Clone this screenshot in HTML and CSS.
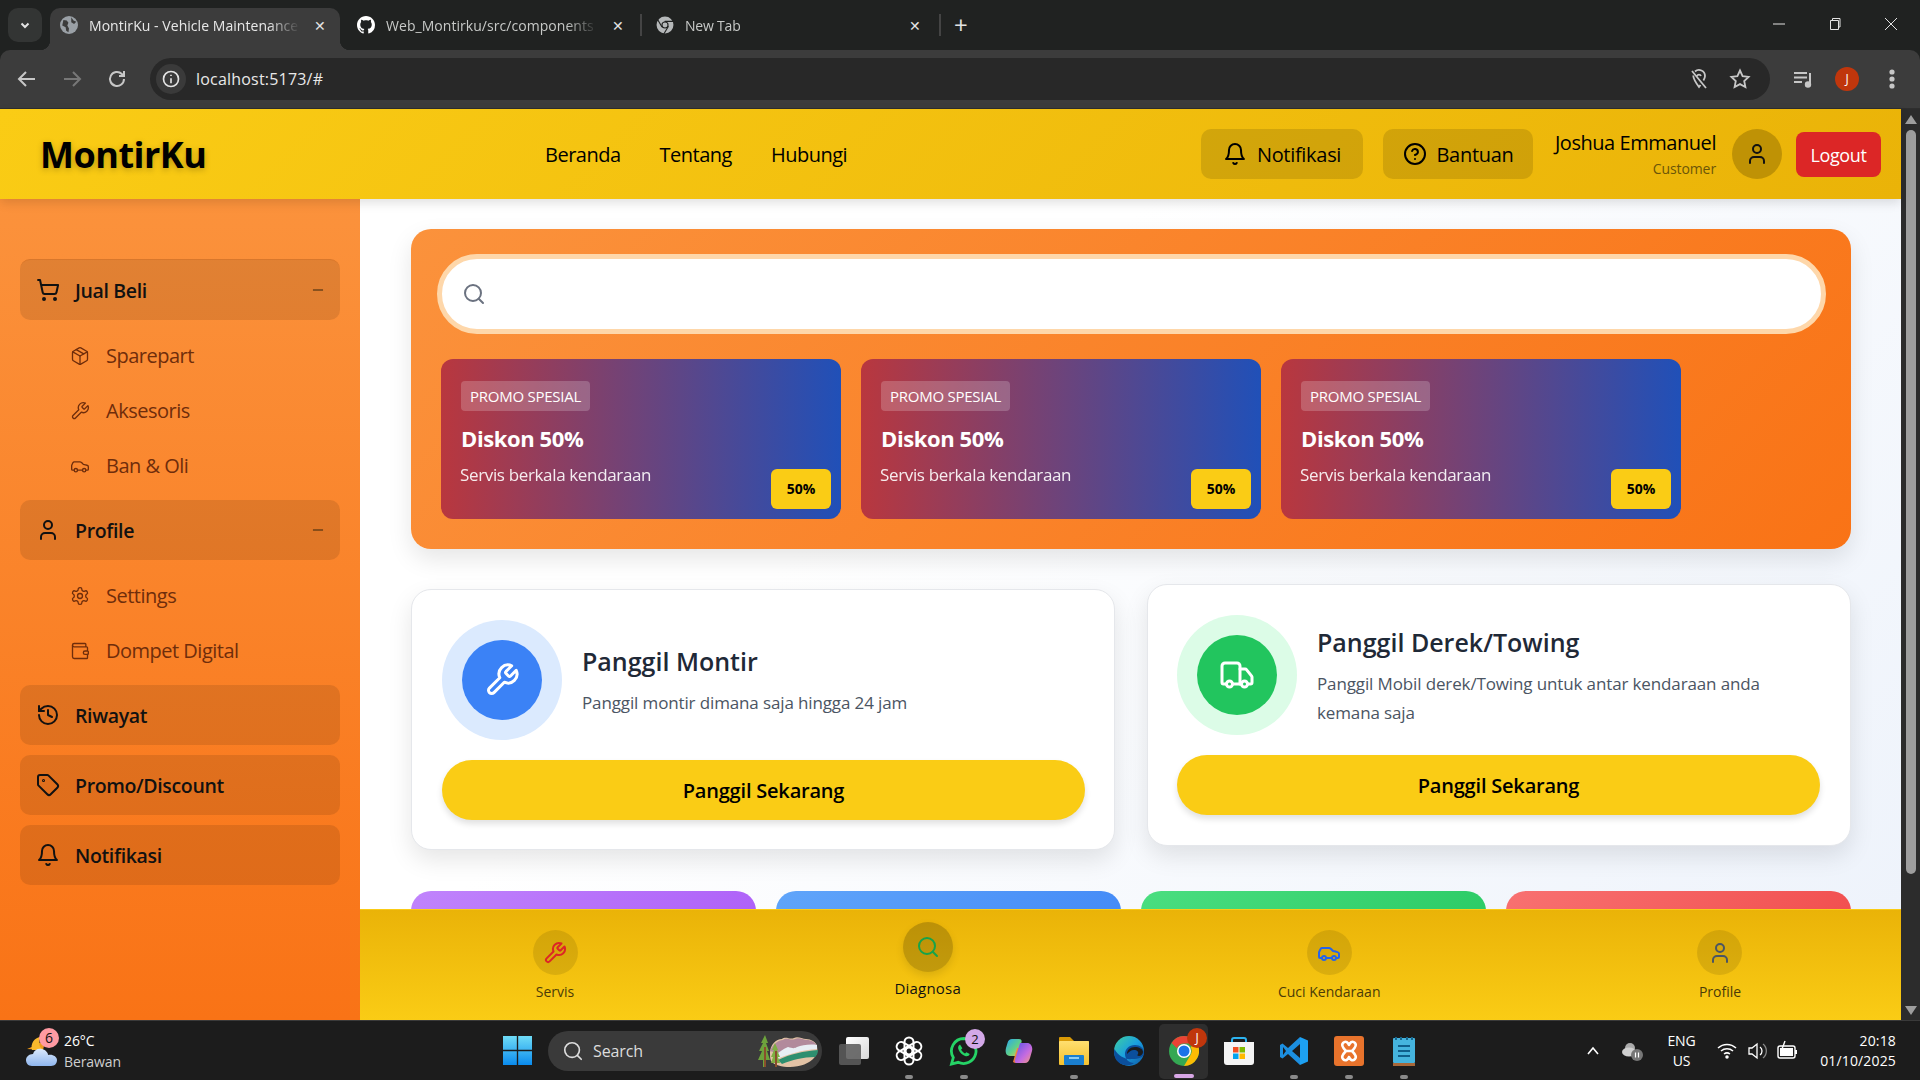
FILE: index.html
```html
<!DOCTYPE html>
<html>
<head>
  <meta charset="UTF-8">
  <link rel="stylesheet" href="styles.css">
  <title>MontirKu - Vehicle Maintenance</title>
</head>
<body>
  <svg class="sprite" xmlns="http://www.w3.org/2000/svg">
    <symbol id="i-cart" viewBox="0 0 24 24"><circle cx="8" cy="21" r="1"/><circle cx="19" cy="21" r="1"/><path d="M2.05 2.05h2l2.66 12.42a2 2 0 0 0 2 1.58h9.78a2 2 0 0 0 1.95-1.57l1.65-7.43H5.12"/></symbol>
    <symbol id="i-package" viewBox="0 0 24 24"><path d="M7.5 4.27l9 5.15"/><path d="M21 8a2 2 0 0 0-1-1.73l-7-4a2 2 0 0 0-2 0l-7 4A2 2 0 0 0 3 8v8a2 2 0 0 0 1 1.73l7 4a2 2 0 0 0 2 0l7-4A2 2 0 0 0 21 16Z"/><path d="m3.3 7 8.7 5 8.7-5"/><path d="M12 22V12"/></symbol>
    <symbol id="i-wrench" viewBox="0 0 24 24"><path d="M14.7 6.3a1 1 0 0 0 0 1.4l1.6 1.6a1 1 0 0 0 1.4 0l3.77-3.77a6 6 0 0 1-7.94 7.94l-6.91 6.91a2.12 2.12 0 0 1-3-3l6.91-6.91a6 6 0 0 1 7.94-7.94l-3.76 3.76z"/></symbol>
    <symbol id="i-car" viewBox="0 0 24 24"><path d="M19 17h2c.6 0 1-.4 1-1v-3c0-.9-.7-1.7-1.5-1.9C18.7 10.6 16 10 16 10s-1.3-1.4-2.2-2.3c-.5-.4-1.1-.7-1.8-.7H5c-.6 0-1.1.4-1.4.9l-1.4 2.9A3.7 3.7 0 0 0 2 12v4c0 .6.4 1 1 1h2"/><circle cx="7" cy="17" r="2"/><path d="M9 17h6"/><circle cx="17" cy="17" r="2"/></symbol>
    <symbol id="i-user" viewBox="0 0 24 24"><path d="M19 21v-2a4 4 0 0 0-4-4H9a4 4 0 0 0-4 4v2"/><circle cx="12" cy="7" r="4"/></symbol>
    <symbol id="i-settings" viewBox="0 0 24 24"><path d="M12.22 2h-.44a2 2 0 0 0-2 2v.18a2 2 0 0 1-1 1.73l-.43.25a2 2 0 0 1-2 0l-.15-.08a2 2 0 0 0-2.73.73l-.22.38a2 2 0 0 0 .73 2.73l.15.1a2 2 0 0 1 1 1.72v.51a2 2 0 0 1-1 1.74l-.15.09a2 2 0 0 0-.73 2.73l.22.38a2 2 0 0 0 2.73.73l.15-.08a2 2 0 0 1 2 0l.43.25a2 2 0 0 1 1 1.73V20a2 2 0 0 0 2 2h.44a2 2 0 0 0 2-2v-.18a2 2 0 0 1 1-1.73l.43-.25a2 2 0 0 1 2 0l.15.08a2 2 0 0 0 2.73-.73l.22-.39a2 2 0 0 0-.73-2.73l-.15-.08a2 2 0 0 1-1-1.74v-.5a2 2 0 0 1 1-1.74l.15-.09a2 2 0 0 0 .73-2.73l-.22-.38a2 2 0 0 0-2.73-.73l-.15.08a2 2 0 0 1-2 0l-.43-.25a2 2 0 0 1-1-1.73V4a2 2 0 0 0-2-2z"/><circle cx="12" cy="12" r="3"/></symbol>
    <symbol id="i-wallet" viewBox="0 0 24 24"><path d="M19 7V4a1 1 0 0 0-1-1H5a2 2 0 0 0 0 4h15a1 1 0 0 1 1 1v4h-3a2 2 0 0 0 0 4h3a1 1 0 0 0 1-1v-2a1 1 0 0 0-1-1"/><path d="M3 5v14a2 2 0 0 0 2 2h15a1 1 0 0 0 1-1v-4"/></symbol>
    <symbol id="i-history" viewBox="0 0 24 24"><path d="M3 12a9 9 0 1 0 9-9 9.75 9.75 0 0 0-6.74 2.74L3 8"/><path d="M3 3v5h5"/><path d="M12 7v5l4 2"/></symbol>
    <symbol id="i-tag" viewBox="0 0 24 24"><path d="M12.586 2.586A2 2 0 0 0 11.172 2H4a2 2 0 0 0-2 2v7.172a2 2 0 0 0 .586 1.414l8.704 8.704a2.426 2.426 0 0 0 3.42 0l6.58-6.58a2.426 2.426 0 0 0 0-3.42z"/><circle cx="7.5" cy="7.5" r=".5"/></symbol>
    <symbol id="i-bell" viewBox="0 0 24 24"><path d="M6 8a6 6 0 0 1 12 0c0 7 3 9 3 9H3s3-2 3-9"/><path d="M10.3 21a1.94 1.94 0 0 0 3.4 0"/></symbol>
    <symbol id="i-help" viewBox="0 0 24 24"><circle cx="12" cy="12" r="10"/><path d="M9.09 9a3 3 0 0 1 5.83 1c0 2-3 3-3 3"/><path d="M12 17h.01"/></symbol>
    <symbol id="i-search" viewBox="0 0 24 24"><circle cx="11" cy="11" r="8"/><path d="m21 21-4.3-4.3"/></symbol>
    <symbol id="i-truck" viewBox="0 0 24 24"><path d="M14 18V6a2 2 0 0 0-2-2H4a2 2 0 0 0-2 2v11a1 1 0 0 0 1 1h2"/><path d="M15 18H9"/><path d="M19 18h2a1 1 0 0 0 1-1v-3.65a1 1 0 0 0-.22-.624l-3.48-4.35A1 1 0 0 0 17.52 8H14"/><circle cx="17" cy="18" r="2"/><circle cx="7" cy="18" r="2"/></symbol>
    <symbol id="i-minus" viewBox="0 0 24 24"><path d="M5 12h14"/></symbol>
    <symbol id="i-globe" viewBox="0 0 16 16"><circle cx="8" cy="8" r="8" fill="#9aa0a6" stroke="none"/><path d="M3 3.5l3 .5 1.5 2-1 2.500 1.500 2.500-.5 3.500-2-1.500-.5-3-3-1.500z M10 1l2 3 2.500 1-2 2-2.500-1.500z" fill="#3c3c3c" stroke="none"/></symbol>
    <symbol id="i-chromelogo" viewBox="0 0 16 16"><circle cx="8" cy="8" r="7.500" fill="#b5b8b9" stroke="none"/><circle cx="8" cy="8" r="3.200" fill="#202221" stroke="none"/><circle cx="8" cy="8" r="2.200" fill="#b5b8b9" stroke="none"/><path d="M8 4.800h7M5.200 9.500L1.800 3.800M10.800 9.500L7.200 15.500" stroke="#202221" stroke-width="1"/></symbol>
  </svg>

  <div class="window">

    <!-- browser tabs -->
    <div class="tabstrip">
      <div class="tab-search"><svg width="12" height="12" viewBox="0 0 12 12"><path d="M2.500 4.500L6 8l3.500-3.500" fill="none" stroke="#e3e3e3" stroke-width="2"/></svg></div>
      <div class="tab active">
        <svg class="ico tab-ico"><use href="#i-globe"/></svg>
        <span class="tab-title">MontirKu - Vehicle Maintenance</span>
        <span class="tab-x">&#10005;</span>
      </div>
      <div class="tab tab-git">
        <svg class="tab-ico" viewBox="0 0 16 16"><path fill="#fff" d="M8 0C3.580 0 0 3.580 0 8c0 3.540 2.290 6.530 5.470 7.590.4.070.55-.17.55-.38 0-.19-.01-.82-.01-1.490-2.010.37-2.530-.49-2.690-.94-.09-.23-.48-.94-.82-1.130-.28-.15-.68-.52-.01-.53.630-.01 1.080.58 1.230.82.720 1.210 1.870.87 2.330.66.070-.52.280-.87.510-1.070-1.780-.2-3.640-.89-3.640-3.950 0-.87.310-1.590.82-2.150-.08-.2-.36-1.020.08-2.120 0 0 .67-.21 2.200.82.64-.18 1.320-.27 2-.27s1.360.09 2 .27c1.530-1.040 2.200-.82 2.200-.82.44 1.100.16 1.920.08 2.120.51.560.82 1.270.82 2.150 0 3.070-1.870 3.750-3.650 3.950.29.250.54.730.54 1.480 0 1.070-.01 1.930-.01 2.200 0 .21.150.46.550.38A8.010 8.010 0 0 0 16 8c0-4.420-3.580-8-8-8z"/></svg>
        <span class="tab-title">Web_Montirku/src/components</span>
        <span class="tab-x">&#10005;</span>
      </div>
      <div class="tab tab-sep">
        <svg class="ico tab-ico"><use href="#i-chromelogo"/></svg>
        <span class="tab-title">New Tab</span>
        <span class="tab-x">&#10005;</span>
      </div>
      <div class="tab-add">+</div>
      <div class="win-controls">
        <svg width="14" height="14" viewBox="0 0 14 14"><path d="M1 7h12" stroke="#e3e3e3" fill="none"/></svg>
        <svg width="14" height="14" viewBox="0 0 14 14"><path d="M2.500 3.500h8v9h-8z M4.500 3.500v-2h7.500v8.500h-1.500" stroke="#e3e3e3" fill="none"/></svg>
        <svg width="14" height="14" viewBox="0 0 14 14"><path d="M1 1l12 12M13 1L1 13" stroke="#e3e3e3" fill="none"/></svg>
      </div>
    </div>

    <!-- browser toolbar -->
    <div class="toolbar">
      <svg class="tool-ico" viewBox="0 0 24 24"><path d="M20 12H5M11 5l-7 7 7 7"/></svg>
      <svg class="tool-ico dim" viewBox="0 0 24 24"><path d="M4 12h15M13 5l7 7-7 7"/></svg>
      <svg class="tool-ico" viewBox="0 0 24 24"><path d="M19 12a7 7 0 1 1-2.200-5.100L19 9M19 4v5h-5"/></svg>
      <div class="omnibox">
        <span class="site-info"><svg viewBox="0 0 24 24"><circle cx="12" cy="12" r="9"/><path d="M12 11v6M12 7v1.500"/></svg></span>
        <span class="url">localhost:5173/#</span>
        <svg class="tool-ico omni-right" viewBox="0 0 24 24"><path d="M5 4l14 17M8 4.500A6 6 0 0 1 18 9c0 1.800-.8 3.200-1.600 4.500M6.200 8.500C6.500 12 9 16 12 20l1.500-2M10 9a2.200 2.200 0 0 1 4 0"/></svg>
        <svg class="tool-ico omni-right" viewBox="0 0 24 24"><path d="M12 3.500l2.600 5.600 6 .7-4.400 4.200 1.200 6.100L12 17.100l-5.400 3 1.200-6.100-4.400-4.200 6-.7z"/></svg>
      </div>
      <svg class="tool-ico media" viewBox="0 0 24 24"><path d="M3 6h13M3 10.500h13M3 15h8M19 6v11" /><circle cx="17" cy="17.500" r="2.200" fill="#c7c7c7"/></svg>
      <span class="chrome-avatar">J</span>
      <svg class="tool-ico dots" viewBox="0 0 24 24"><circle cx="12" cy="5" r="1.600" fill="#c7c7c7"/><circle cx="12" cy="12" r="1.600" fill="#c7c7c7"/><circle cx="12" cy="19" r="1.600" fill="#c7c7c7"/></svg>
    </div>

    <div class="viewport">
      <div class="page">

        <header class="header">
          <div class="logo">MontirKu</div>
          <nav class="topnav">
            <a>Beranda</a>
            <a>Tentang</a>
            <a>Hubungi</a>
          </nav>
          <div class="header-right">
            <button class="head-btn btn-notif"><svg class="ico"><use href="#i-bell"/></svg>Notifikasi</button>
            <button class="head-btn btn-help"><svg class="ico"><use href="#i-help"/></svg>Bantuan</button>
            <div class="user-info">
              <div class="user-name">Joshua Emmanuel</div>
              <div class="user-role">Customer</div>
            </div>
            <div class="user-avatar"><svg class="ico"><use href="#i-user"/></svg></div>
            <button class="logout">Logout</button>
          </div>
        </header>

        <div class="body-row">
          <aside class="sidebar">
            <div class="side-item first"><svg class="ico"><use href="#i-cart"/></svg><span>Jual Beli</span><svg class="ico side-minus"><use href="#i-minus"/></svg></div>
            <div class="side-sub"><svg class="ico"><use href="#i-package"/></svg>Sparepart</div>
            <div class="side-sub"><svg class="ico"><use href="#i-wrench"/></svg>Aksesoris</div>
            <div class="side-sub"><svg class="ico"><use href="#i-car"/></svg>Ban &amp; Oli</div>
            <div class="side-item"><svg class="ico"><use href="#i-user"/></svg><span>Profile</span><svg class="ico side-minus"><use href="#i-minus"/></svg></div>
            <div class="side-sub"><svg class="ico"><use href="#i-settings"/></svg>Settings</div>
            <div class="side-sub"><svg class="ico"><use href="#i-wallet"/></svg>Dompet Digital</div>
            <div class="side-item"><svg class="ico"><use href="#i-history"/></svg><span>Riwayat</span></div>
            <div class="side-item"><svg class="ico"><use href="#i-tag"/></svg><span>Promo/Discount</span></div>
            <div class="side-item"><svg class="ico"><use href="#i-bell"/></svg><span>Notifikasi</span></div>
          </aside>

          <main class="main">
            <div class="content">
              <section class="panel">
                <div class="search-box"><svg class="ico"><use href="#i-search"/></svg></div>
                <div class="promo-row">
                  <div class="promo">
                    <span class="promo-tag">PROMO SPESIAL</span>
                    <h3>Diskon 50%</h3>
                    <p>Servis berkala kendaraan</p>
                    <span class="promo-off">50%</span>
                  </div>
                  <div class="promo">
                    <span class="promo-tag">PROMO SPESIAL</span>
                    <h3>Diskon 50%</h3>
                    <p>Servis berkala kendaraan</p>
                    <span class="promo-off">50%</span>
                  </div>
                  <div class="promo">
                    <span class="promo-tag">PROMO SPESIAL</span>
                    <h3>Diskon 50%</h3>
                    <p>Servis berkala kendaraan</p>
                    <span class="promo-off">50%</span>
                  </div>
                </div>
              </section>

              <section class="call-row">
                <div class="call-card low">
                  <div class="call-top">
                    <div class="ring ring-blue"><div class="disc disc-blue"><svg class="ico"><use href="#i-wrench"/></svg></div></div>
                    <div class="call-text">
                      <h2>Panggil Montir</h2>
                      <p>Panggil montir dimana saja hingga 24 jam</p>
                    </div>
                  </div>
                  <button class="call-btn">Panggil Sekarang</button>
                </div>
                <div class="call-card high">
                  <div class="call-top">
                    <div class="ring ring-green"><div class="disc disc-green"><svg class="ico"><use href="#i-truck"/></svg></div></div>
                    <div class="call-text">
                      <h2>Panggil Derek/Towing</h2>
                      <p>Panggil Mobil derek/Towing untuk antar kendaraan anda kemana saja</p>
                    </div>
                  </div>
                  <button class="call-btn">Panggil Sekarang</button>
                </div>
              </section>

              <section class="tile-row">
                <div class="tile tile-purple"></div>
                <div class="tile tile-blue"></div>
                <div class="tile tile-green"></div>
                <div class="tile tile-red"></div>
              </section>
            </div>

            <nav class="bottomnav">
              <div class="bn-item"><span class="bn-icon red"><svg class="ico"><use href="#i-wrench"/></svg></span>Servis</div>
              <div class="bn-item active"><span class="bn-icon green"><svg class="ico"><use href="#i-search"/></svg></span>Diagnosa</div>
              <div class="bn-item"><span class="bn-icon blue"><svg class="ico"><use href="#i-car"/></svg></span>Cuci Kendaraan</div>
              <div class="bn-item"><span class="bn-icon gray"><svg class="ico"><use href="#i-user"/></svg></span>Profile</div>
            </nav>
          </main>
        </div>
      </div>

      <div class="scrollbar">
        <span class="arrow-up"></span>
        <span class="thumb"></span>
        <span class="arrow-down"></span>
      </div>
    </div>

    <!-- windows taskbar -->
    <footer class="taskbar">
      <div class="weather">
        <svg class="weather-ico" viewBox="0 0 34 34">
          <defs><linearGradient id="cloud" x1="0" y1="0" x2="0" y2="1"><stop offset="0" stop-color="#dbe9fb"/><stop offset="1" stop-color="#8fb6ee"/></linearGradient></defs>
          <path d="M3 15l7-3 1-6 5 3 5-1-2 8z" fill="#ee9a1c"/>
          <path d="M17 3a9 9 0 0 0 2 13H8a10 10 0 0 1 9-13z" fill="#f9b92c"/>
          <path d="M8 32c-4 0-6-3-6-6s3-6 7-6c1-4 5-6 9-5s6 4 6 6c5-1 9 2 9 5s-2 6-6 6z" fill="url(#cloud)"/>
        </svg>
        <span class="weather-badge">6</span>
        <div class="weather-text"><div>26°C</div><div class="weather-sub">Berawan</div></div>
      </div>

      <div class="tb-center">
        <svg class="start" viewBox="0 0 30 30"><defs><linearGradient id="win" x1="0" y1="0" x2="0" y2="1"><stop offset="0" stop-color="#6fdcf6"/><stop offset="1" stop-color="#0a8bee"/></linearGradient></defs><path fill="url(#win)" d="M0 0h14.300v14.300H0zM15.700 0H30v14.300H15.700zM0 15.700h14.300V30H0zM15.700 15.700H30V30H15.700z"/></svg>
        <div class="tb-search">
          <svg class="ico"><use href="#i-search"/></svg>
          <span>Search</span>
          <svg class="tb-search-art" viewBox="0 0 64 36">
            <path d="M14 20c0-8 6-14 12-14 4-3 8 1 12-1 4-2 8 1 12 1 5 0 10 3 11 7 1 5 0 9-3 12-4 5-14 9-24 9-8 0-16-2-19-6-1-2-1-5-1-8z" fill="#e3c3a6"/>
            <path d="M14 18c3-7 8-11 13-11 4-3 8 1 12-1 4-2 8 1 12 1 4 0 8 2 10 6l-20 3-14 6z" fill="#b28a9c"/>
            <path d="M17 24c5-4 10-8 15-10 4 1 6 2 9 0 5-2 13-3 20-2v4c-14 1-30 5-42 11z" fill="#e8eef4"/>
            <path d="M22 27c12-6 26-9 40-10 0 3-1 5-3 7-12 0-23 3-33 7z" fill="#2e8f6f"/>
            <path d="M9 2L5 10h2L3 18h3L2 27h5v7h3v-7h4l-3-9h2l-3-8h2z" fill="#6da33c"/>
            <path d="M8 14h2v20H8z" fill="#8a4f2c"/>
            <path d="M19 10l-3 7h2l-3 7h2l-2 6h4v4h2v-4h3l-2-6h2l-3-7h1z" fill="#7fae42"/>
            <path d="M19 18h2v16h-2z" fill="#8a4f2c"/>
          </svg>
        </div>
        <div class="tb-app">
          <svg viewBox="0 0 30 30"><defs><linearGradient id="tv" x1="0" y1="0" x2="1" y2="1"><stop offset="0" stop-color="#fff"/><stop offset="1" stop-color="#d8d8d8"/></linearGradient></defs><rect x="7" y="1" width="23" height="22" rx="2" fill="url(#tv)"/><rect x="0" y="8" width="22" height="21" rx="2" fill="#5c5c5c" opacity=".88"/></svg>
        </div>
        <div class="tb-app running">
          <svg viewBox="0 0 30 30" fill="none" stroke="#fff" stroke-width="2">
            <rect x="10.500" y="1.500" width="9" height="17" rx="4.500" transform="rotate(0 15 15)"/>
            <rect x="10.500" y="1.500" width="9" height="17" rx="4.500" transform="rotate(60 15 15)"/>
            <rect x="10.500" y="1.500" width="9" height="17" rx="4.500" transform="rotate(120 15 15)"/>
            <rect x="10.500" y="1.500" width="9" height="17" rx="4.500" transform="rotate(180 15 15)"/>
            <rect x="10.500" y="1.500" width="9" height="17" rx="4.500" transform="rotate(240 15 15)"/>
            <rect x="10.500" y="1.500" width="9" height="17" rx="4.500" transform="rotate(300 15 15)"/>
          </svg>
        </div>
        <div class="tb-app running">
          <svg viewBox="0 0 30 30" fill="none"><path d="M15 2.500a12.500 12.500 0 0 0-10.700 19L2.500 28l6.700-1.700A12.500 12.500 0 1 0 15 2.500z" stroke="#25d366" stroke-width="2.800"/><path d="M11 8.500c-1.800 1-2.500 3-1.300 5.600 1.300 3 3.700 5 6.400 6 2.300.7 4-.2 4.600-2l-3.300-1.900-1.400 1.300c-1.600-.7-3.200-2.200-3.900-3.900l1.300-1.400z" fill="#25d366"/></svg>
          <span class="count">2</span>
        </div>
        <div class="tb-app">
          <svg viewBox="0 0 30 30">
            <defs>
              <linearGradient id="cop1" x1="0" y1="0" x2="1" y2="1"><stop offset="0" stop-color="#2aa7ee"/><stop offset=".55" stop-color="#5fd08a"/><stop offset="1" stop-color="#f6c945"/></linearGradient>
              <linearGradient id="cop2" x1="0" y1="0" x2="1" y2="1"><stop offset="0" stop-color="#5b54e8"/><stop offset=".6" stop-color="#c56be0"/><stop offset="1" stop-color="#f39a7c"/></linearGradient>
              <linearGradient id="cop3" x1="0" y1="0" x2="1" y2="1"><stop offset="0" stop-color="#f2b13a"/><stop offset="1" stop-color="#e8443f"/></linearGradient>
            </defs>
            <path d="M8 3h7c2 0 3 1 2.500 3L14 20H6c-4 0-5-4-4-8l1.500-5C4 4.500 6 3 8 3z" fill="url(#cop1)"/>
            <path d="M9 26l4-14h3l-2 12c-.3 2-1 3-3 3z" fill="url(#cop3)"/>
            <path d="M16 7h7c4 0 6 4 5 8l-2 7c-.8 3-2.500 5-5 5h-8c-2 0-2.500-1-2-3z" fill="url(#cop2)"/>
          </svg>
        </div>
        <div class="tb-app running">
          <svg viewBox="0 0 30 30"><defs><linearGradient id="fold" x1="0" y1="0" x2="0" y2="1"><stop offset="0" stop-color="#ffdf70"/><stop offset="1" stop-color="#f5c12e"/></linearGradient></defs><path d="M0 2a1 1 0 0 1 1-1h10l4 4h14a1 1 0 0 1 1 1v4H0z" fill="#d99a06"/><rect x="0" y="5" width="30" height="24" rx="1" fill="url(#fold)"/><rect x="5" y="19" width="20" height="10" rx="1" fill="#1a7fd0"/><rect x="10" y="21" width="10" height="2" fill="#8ccdf5"/></svg>
        </div>
        <div class="tb-app">
          <svg viewBox="0 0 30 30"><defs><linearGradient id="edge" x1="0" y1="0" x2="1" y2="1"><stop offset="0" stop-color="#3fd0a0"/><stop offset=".5" stop-color="#1a9fe0"/><stop offset="1" stop-color="#0c59a4"/></linearGradient></defs><circle cx="15" cy="15" r="15" fill="url(#edge)"/><path d="M30 17c0-5-4-8-9-8-6 0-10 4-10 9 0 5 4 9 9 9-6 5-20 2-20-11 0-1 0-2 .5-3C4 20 12 24 18 23c7 0 12-2 12-6z" fill="#0b4f9c"/><path d="M13 18c0-4 3-7 8-7 4 0 8 2 8 5 0 2-2 4-4 4s-2-1-1-2c1-2-1-4-4-4s-5 2-7 4z" fill="#1c1c1c"/></svg>
        </div>
        <div class="tb-app current">
          <svg viewBox="0 0 30 30"><circle cx="15" cy="15" r="15" fill="#34a853"/><path d="M15 0a15 15 0 0 1 13 7.500H15a7.500 7.500 0 0 0-7 4.800L2.500 7A15 15 0 0 1 15 0z" fill="#ea4335"/><path d="M28 7.500A15 15 0 0 1 15 30l6.500-11A7.500 7.500 0 0 0 21.500 11z" fill="#fbbc04"/><circle cx="15" cy="15" r="7" fill="#fff"/><circle cx="15" cy="15" r="5.500" fill="#1a73e8"/></svg>
          <span class="profile-dot">J</span>
        </div>
        <div class="tb-app">
          <svg viewBox="0 0 30 30"><path d="M8 8V4a2 2 0 0 1 2-2h10a2 2 0 0 1 2 2v4" fill="none" stroke="#2cb3f0" stroke-width="2"/><path d="M0 6h30v20a3 3 0 0 1-3 3H3a3 3 0 0 1-3-3z" fill="#f4f4f4"/><rect x="9" y="11" width="5.500" height="5.500" fill="#f25022"/><rect x="15.500" y="11" width="5.500" height="5.500" fill="#7fba00"/><rect x="9" y="17.500" width="5.500" height="5.500" fill="#00a4ef"/><rect x="15.500" y="17.500" width="5.500" height="5.500" fill="#ffb900"/></svg>
        </div>
        <div class="tb-app running">
          <svg viewBox="0 0 30 30"><path d="M21 1L9 12 3.500 7.500 1 9v12l2.500 1.500L9 18l12 11z" fill="#1c8fe0"/><path d="M21 8l-8 7 8 7zM4 11l3 4-3 4z" fill="#1c1c1c"/><path d="M21 1l8 3.500v21L21 29z" fill="#1da1f2"/></svg>
        </div>
        <div class="tb-app running">
          <svg viewBox="0 0 30 30"><rect x="0" y="0" width="30" height="30" rx="3" fill="#e8732c"/><path d="M9 7c3-3 5 0 6 2 1-2 3-5 6-2 2 2 0 5-3 8 3 3 5 6 3 8-3 3-5 0-6-2-1 2-3 5-6 2-2-2 0-5 3-8-3-3-5-6-3-8zM12 15h6" fill="none" stroke="#fff" stroke-width="2.600" stroke-linejoin="round"/></svg>
        </div>
        <div class="tb-app running">
          <svg class="notepad" viewBox="0 0 22 30"><rect x="0" y="2" width="22" height="25" rx="1" fill="#45b4de"/><rect x="0" y="27" width="22" height="3" fill="#a8683a"/><path d="M3 1v3M8 1v3M14 1v3M19 1v3" stroke="#17688f" stroke-width="2"/><path d="M5 10h12M5 15h12M5 20h12" stroke="#0f5f8c" stroke-width="2"/></svg>
        </div>
      </div>

      <div class="tray">
        <div class="tray-cell w40"><svg width="14" height="14" viewBox="0 0 14 14"><path d="M2 10l5-6 5 6" fill="none" stroke="#fff" stroke-width="1.600"/></svg></div>
        <div class="tray-cell w38"><svg width="24" height="24" viewBox="0 0 24 24"><circle cx="10" cy="9" r="5" fill="#aaa"/><ellipse cx="9" cy="13" rx="7" ry="4.500" fill="#d0d0d0"/><circle cx="17" cy="16" r="6" fill="#777"/><path d="M15.500 13.500v5M18.500 13.500v5" stroke="#fff" stroke-width="1.200"/></svg></div>
        <div class="tray-lang"><div>ENG</div><div>US</div></div>
        <div class="tray-cell w30"><svg width="22" height="22" viewBox="0 0 22 22" fill="none" stroke="#fff" stroke-width="1.500"><path d="M2 8a13 13 0 0 1 18 0M5 11a9 9 0 0 1 12 0M8 14a5 5 0 0 1 6 0"/><circle cx="11" cy="17" r="1" fill="#fff"/></svg></div>
        <div class="tray-cell w30"><svg width="22" height="22" viewBox="0 0 22 22" fill="none" stroke="#fff" stroke-width="1.300"><path d="M3 8h3l5-4v14l-5-4H3z"/><path d="M14 7a5 5 0 0 1 0 8" /><path d="M17 4a9 9 0 0 1 0 14" stroke="#888"/></svg></div>
        <div class="tray-cell w30"><svg width="22" height="22" viewBox="0 0 22 22"><rect x="2" y="6" width="17" height="12" rx="2" fill="none" stroke="#fff" stroke-width="1.400"/><rect x="4" y="8" width="13" height="8" fill="#fff"/><rect x="19" y="10" width="2" height="4" fill="#fff"/><path d="M9 1l-3 8h3l-1 5" fill="none" stroke="#fff" stroke-width="1.400"/></svg></div>
        <div class="tray-clock"><div>20:18</div><div>01/10/2025</div></div>
      </div>
    </footer>
  </div>
</body>
</html>
```

FILE: styles.css
```css
* {
  box-sizing: border-box;
}

html, body {
  margin: 0;
  height: 100%;
  overflow: hidden;
}

body {
  font-family: "Open Sans", "Noto Sans", sans-serif;
  color: #111;
}

h2, h3, p {
  margin: 0;
}

button {
  font-family: inherit;
  border: none;
}

.sprite {
  display: none;
}

.ico {
  width: 24px;
  height: 24px;
  fill: none;
  stroke: currentColor;
  stroke-width: 2;
  stroke-linecap: round;
  stroke-linejoin: round;
  flex: none;
}

.window {
  height: 1080px;
  display: flex;
  flex-direction: column;
  background: #202221;
}

/* browser chrome */
.tabstrip {
  height: 50px;
  flex: none;
  display: flex;
  align-items: flex-end;
  padding-left: 8px;
  color: #c7c9c7;
  font-size: 14px;
  letter-spacing: -0.2px;
}

.tab-search {
  width: 34px;
  height: 34px;
  margin: 0 8px 8px 0;
  background: #333534;
  border-radius: 10px;
  display: flex;
  align-items: center;
  justify-content: center;
}

.tab {
  position: relative;
  width: 300px;
  height: 42px;
  padding: 0 10px 8px 10px;
  display: flex;
  align-items: center;
  gap: 10px;
}

.tab.active {
  width: 290px;
  background: #3c3c3c;
  border-radius: 10px 10px 0 0;
  color: #e8e8e8;
  padding-right: 11px;
  gap: 11px;
  letter-spacing: 0.05px;
}

.tab.active::before,
.tab.active::after {
  content: "";
  position: absolute;
  bottom: 0;
  width: 10px;
  height: 10px;
}

.tab.active::before {
  left: -10px;
  background: radial-gradient(circle at 0 0, transparent 10px, #3c3c3c 10.5px);
}

.tab.active::after {
  right: -10px;
  background: radial-gradient(circle at 100% 0, transparent 10px, #3c3c3c 10.5px);
}

.tab-git {
  padding: 0 13px 8px 17px;
  gap: 11px;
  letter-spacing: 0.05px;
}

.tab-sep {
  width: 299px;
  border-left: 2px solid #444;
  height: 22px;
  margin-bottom: 14px;
  padding: 0 15px 0 14px;
  gap: 11px;
}

.tab-sep .tab-x {
  margin-left: auto;
}

.tab-ico {
  width: 18px;
  height: 18px;
  flex: none;
}

.tab-title {
  flex: 1;
  white-space: nowrap;
  overflow: hidden;
  -webkit-mask-image: linear-gradient(to right, #000 85%, transparent);
  mask-image: linear-gradient(to right, #000 85%, transparent);
}

.tab-x {
  font-size: 14px;
  color: #e3e3e3;
  flex: none;
  width: 18px;
  text-align: center;
}

.tab-add {
  border-left: 2px solid #444;
  height: 22px;
  margin-bottom: 14px;
  padding-left: 13px;
  font-size: 24px;
  line-height: 22px;
  color: #e3e3e3;
}

.win-controls {
  margin-left: auto;
  align-self: flex-start;
  display: flex;
  gap: 42px;
  padding: 17px 22px 0 0;
}

.toolbar {
  height: 59px;
  flex: none;
  background: #3c3c3c;
  border-bottom: 1px solid #2e2e2e;
  border-radius: 10px 10px 0 0;
  display: flex;
  align-items: center;
  padding: 0 15px 0 15px;
}

.tool-ico {
  width: 24px;
  height: 24px;
  fill: none;
  stroke: #c7c7c7;
  stroke-width: 2;
  margin-right: 21px;
  flex: none;
}

.tool-ico.dim {
  stroke: #777;
}

.omnibox {
  width: 1620px;
  height: 42px;
  background: #282828;
  border-radius: 21px;
  display: flex;
  align-items: center;
  padding: 0 18px 0 6px;
}

.site-info {
  width: 30px;
  height: 30px;
  border-radius: 50%;
  background: #3a3a3a;
  margin-right: 10px;
  display: flex;
  align-items: center;
  justify-content: center;
}

.site-info svg {
  width: 20px;
  height: 20px;
  fill: none;
  stroke: #e3e3e3;
  stroke-width: 2;
}

.url {
  font-size: 16px;
  color: #e8e8e8;
  letter-spacing: 0.2px;
  flex: 1;
}

.omni-right {
  margin: 0 0 0 17px;
  stroke-width: 1.8;
}

.media {
  margin: 0 20px 0 21px;
}

.chrome-avatar {
  width: 24px;
  height: 24px;
  border-radius: 50%;
  background: #c0360c;
  color: #fff;
  font-size: 12px;
  text-align: center;
  line-height: 24px;
  flex: none;
}

.dots {
  margin: 0 0 0 21px;
}

/* page */
.viewport {
  flex: 1;
  display: flex;
  min-height: 0;
}

.page {
  flex: 1;
  display: flex;
  flex-direction: column;
  min-width: 0;
}

.header {
  height: 90px;
  flex: none;
  z-index: 2;
  background: linear-gradient(135deg, #facc15, #eab308);
  box-shadow: 0 4px 10px rgba(0, 0, 0, 0.12);
  display: flex;
  align-items: center;
  padding: 0 20px 0 40px;
}

.logo {
  font-size: 36px;
  font-weight: 700;
  color: #000;
  letter-spacing: -0.5px;
  text-shadow: 0 2px 6px rgba(0, 0, 0, 0.25);
  width: 505px;
}

.topnav {
  display: flex;
  gap: 39px;
  font-size: 20px;
  font-weight: 500;
  letter-spacing: -0.5px;
  color: #000;
}

.header-right {
  margin-left: auto;
  display: flex;
  align-items: center;
}

.head-btn {
  height: 50px;
  background: rgba(0, 0, 0, 0.12);
  border-radius: 10px;
  color: #000;
  font-size: 20px;
  font-weight: 500;
  letter-spacing: -0.3px;
  display: flex;
  align-items: center;
  justify-content: center;
  gap: 10px;
}

.btn-notif {
  width: 162px;
  margin-right: 20px;
}

.btn-help {
  width: 150px;
  margin-right: 20px;
}

.user-info {
  width: 163px;
  text-align: right;
  margin-right: 16px;
  white-space: nowrap;
}

.user-name {
  font-size: 20px;
  font-weight: 500;
  letter-spacing: -0.45px;
  line-height: 27px;
  color: #000;
}

.user-role {
  font-size: 14px;
  color: #6b5508;
  letter-spacing: -0.1px;
  line-height: 20px;
  margin-top: 3px;
}

.user-avatar {
  width: 50px;
  height: 50px;
  border-radius: 50%;
  background: #bf9205;
  display: flex;
  align-items: center;
  justify-content: center;
  margin-right: 14px;
}

.logout {
  width: 85px;
  height: 45px;
  background: #dc2626;
  color: #fff;
  border-radius: 8px;
  font-size: 18px;
  font-weight: 500;
  letter-spacing: -0.4px;
  padding-top: 2px;
}

.body-row {
  flex: 1;
  display: flex;
  min-height: 0;
}

.sidebar {
  width: 360px;
  flex: none;
  background: linear-gradient(180deg, #fb923c, #f97316);
  padding: 60px 20px 0;
  display: flex;
  flex-direction: column;
}

.side-item {
  height: 60px;
  flex: none;
  border-radius: 10px;
  background: rgba(0, 0, 0, 0.1);
  display: flex;
  align-items: center;
  padding: 0 14px 0 16px;
  gap: 15px;
  font-size: 19.5px;
  font-weight: 600;
  letter-spacing: -0.35px;
  margin-bottom: 10px;
  color: #111;
}

.side-item.first {
  height: 61px;
  border-top: 1px solid #d8772b;
}

.side-minus {
  margin-left: auto;
  width: 16px;
  height: 16px;
  stroke-width: 1.5;
  color: #33240c;
}

.side-sub {
  height: 55px;
  flex: none;
  display: flex;
  align-items: center;
  padding-left: 50px;
  gap: 16px;
  font-size: 20px;
  letter-spacing: -0.5px;
  color: #6f2d0b;
}

.side-sub .ico {
  width: 20px;
  height: 20px;
  stroke-width: 1.600;
}

.side-item + .side-sub {
  margin-top: -2px;
}

.side-sub + .side-item {
  margin-top: 7px;
}

.main {
  flex: 1;
  min-width: 0;
  display: flex;
  flex-direction: column;
}

.content {
  flex: 1;
  min-height: 0;
  overflow: hidden;
  padding: 30px 50px 0;
  background: linear-gradient(135deg, #ffffff 35%, #eef3fb);
}

.panel {
  height: 320px;
  margin-left: 1px;
  border-radius: 20px;
  background: linear-gradient(135deg, #fb923c, #f97316);
  box-shadow: 0 10px 25px rgba(0, 0, 0, 0.1);
  padding: 25px 25px 0 26px;
}

.search-box {
  height: 80px;
  background: #fff;
  border: 5px solid #fed7aa;
  border-radius: 40px;
  display: flex;
  align-items: center;
  padding-left: 20px;
  color: #6b7280;
}

.promo-row {
  display: flex;
  gap: 20px;
  margin-top: 25px;
  padding-left: 4px;
}

.promo {
  position: relative;
  width: 400px;
  height: 160px;
  border-radius: 12px;
  background: linear-gradient(90deg, #b9373e, #2050b8);
  color: #fff;
  padding: 22px 20px;
}

.promo-tag {
  display: inline-block;
  height: 30px;
  line-height: 30px;
  padding: 0 9px;
  background: rgba(255, 255, 255, 0.2);
  border-radius: 4px;
  font-size: 15px;
  letter-spacing: -0.25px;
}

.promo h3 {
  font-size: 22px;
  font-weight: 700;
  line-height: 30px;
  margin-top: 12px;
  letter-spacing: -0.4px;
}

.promo p {
  font-size: 17px;
  line-height: 24px;
  margin-top: 10px;
  margin-left: -1px;
  letter-spacing: -0.35px;
  opacity: 0.9;
}

.promo-off {
  position: absolute;
  right: 10px;
  bottom: 10px;
  width: 60px;
  height: 40px;
  line-height: 40px;
  text-align: center;
  background: #facc15;
  border-radius: 6px;
  color: #000;
  font-size: 14px;
  font-weight: 700;
}

.call-row {
  display: grid;
  grid-template-columns: 704px 704px;
  justify-content: space-between;
  align-items: start;
  margin: 35px 0 0 1px;
}

.call-card {
  background: #fff;
  border: 1px solid #e5e7eb;
  border-radius: 20px;
  box-shadow: 0 10px 25px rgba(0, 0, 0, 0.1);
}

.call-card.low {
  height: 261px;
  margin-top: 5px;
  padding: 30px 29px 30px 30px;
}

.call-card.high {
  height: 262px;
  padding: 30px 30px 30px 29px;
}

.call-top {
  display: flex;
  align-items: center;
  gap: 20px;
  height: 120px;
  margin-bottom: 20px;
}

.ring {
  width: 120px;
  height: 120px;
  border-radius: 50%;
  flex: none;
  display: flex;
  align-items: center;
  justify-content: center;
}

.ring-blue {
  background: #dbeafe;
}

.ring-green {
  background: #dcfce7;
}

.disc {
  width: 80px;
  height: 80px;
  border-radius: 50%;
  color: #fff;
  display: flex;
  align-items: center;
  justify-content: center;
}

.disc .ico {
  width: 36px;
  height: 36px;
}

.disc-blue {
  background: #3b82f6;
}

.disc-green {
  background: #22c55e;
}

.call-text {
  padding-top: 3px;
}

.low .call-text {
  padding-top: 1px;
}

.call-text h2 {
  font-size: 25px;
  font-weight: 600;
  line-height: 32px;
  color: #1f2937;
  margin-bottom: 11px;
}

.call-text p {
  font-size: 17px;
  line-height: 29px;
  color: #4b5563;
  letter-spacing: -0.13px;
}

.call-btn {
  width: 100%;
  height: 60px;
  border-radius: 30px;
  background: #facc15;
  color: #000;
  font-size: 20px;
  font-weight: 600;
  letter-spacing: -0.2px;
  box-shadow: 0 4px 6px rgba(0, 0, 0, 0.12);
}

.tile-row {
  display: grid;
  grid-template-columns: repeat(4, 345px);
  justify-content: space-between;
  margin: 41px 0 0 1px;
}

.tile {
  height: 150px;
  border-radius: 20px;
}

.tile-purple {
  background: linear-gradient(135deg, #c084fc, #a855f7);
}

.tile-blue {
  background: linear-gradient(135deg, #60a5fa, #3b82f6);
}

.tile-green {
  background: linear-gradient(135deg, #4ade80, #22c55e);
}

.tile-red {
  background: linear-gradient(135deg, #f87171, #ef4444);
}

.bottomnav {
  height: 111px;
  flex: none;
  z-index: 2;
  background: linear-gradient(180deg, #eab308, #facc15);
  border-top: 1px solid #facc15;
  display: flex;
  justify-content: space-around;
  align-items: flex-start;
  padding: 20px 0 0 14px;
  font-size: 14px;
  color: #4b3b08;
}

.bn-item {
  display: flex;
  flex-direction: column;
  align-items: center;
  gap: 7px;
}

.bn-icon {
  width: 45px;
  height: 45px;
  border-radius: 50%;
  background: rgba(0, 0, 0, 0.1);
  display: flex;
  align-items: center;
  justify-content: center;
}

.bn-item.active {
  margin-top: -8px;
  color: #111;
  font-size: 15px;
  font-weight: 500;
  letter-spacing: 0.2px;
  gap: 6px;
}

.bn-item.active .bn-icon {
  width: 50px;
  height: 50px;
  background: rgba(0, 0, 0, 0.2);
  box-shadow: 0 4px 8px rgba(0, 0, 0, 0.1);
}

.red {
  color: #dc2626;
}

.green {
  color: #16a34a;
}

.blue {
  color: #2563eb;
}

.gray {
  color: #4b5563;
}

.scrollbar {
  width: 19px;
  flex: none;
  background: #2c2c2c;
  display: flex;
  flex-direction: column;
  align-items: center;
  padding: 6px 0 5px;
}

.thumb {
  width: 10px;
  flex: 1;
  margin: 6px 0 132px;
  background: #9e9e9e;
  border-radius: 5px;
}

.arrow-up,
.arrow-down {
  width: 0;
  height: 0;
  border-left: 6px solid transparent;
  border-right: 6px solid transparent;
}

.arrow-up {
  border-bottom: 9px solid #9e9e9e;
}

.arrow-down {
  border-top: 9px solid #9e9e9e;
}

/* taskbar */
.taskbar {
  height: 60px;
  flex: none;
  background: #1c1c1c;
  border-top: 1px solid #3a3a3a;
  display: grid;
  grid-template-columns: 503px auto 1fr;
  align-items: center;
  color: #fff;
  font-size: 14px;
  letter-spacing: -0.1px;
}

.weather {
  position: relative;
  display: flex;
  align-items: center;
  padding-left: 24px;
  gap: 6px;
}

.weather-ico {
  width: 34px;
  height: 34px;
}

.weather-badge {
  position: absolute;
  left: 39px;
  top: -2px;
  width: 20px;
  height: 20px;
  border-radius: 50%;
  background: #ff9aa2;
  color: #111;
  font-size: 14px;
  line-height: 20px;
  text-align: center;
}

.weather-text {
  line-height: 21px;
}

.weather-sub {
  color: #cfcfcf;
}

.tb-center {
  display: flex;
  align-items: center;
  height: 100%;
}

.start {
  width: 29px;
  height: 29px;
  margin-right: 16px;
}

.tb-search {
  width: 274px;
  height: 40px;
  background: #3a3a3a;
  border-radius: 20px;
  margin-right: 4px;
  display: flex;
  align-items: center;
  padding-left: 14px;
  gap: 9px;
  color: #ddd;
  font-size: 16px;
}

.tb-search .ico {
  width: 22px;
  height: 22px;
  stroke-width: 1.800;
}

.tb-search-art {
  width: 64px;
  height: 36px;
  margin-left: auto;
  margin-right: 2px;
}

.tb-app {
  position: relative;
  width: 55px;
  height: 100%;
  display: flex;
  align-items: center;
  justify-content: center;
}

.tb-app > svg {
  width: 30px;
  height: 30px;
}

.tb-app > svg.notepad {
  width: 22px;
}

.running::after {
  content: "";
  position: absolute;
  bottom: 1px;
  width: 8px;
  height: 4px;
  border-radius: 2px;
  background: #8a8a8a;
}

.current::before {
  content: "";
  position: absolute;
  top: 3px;
  bottom: 1px;
  left: 3px;
  right: 3px;
  background: #2e2e2e;
  border-radius: 5px;
}

.current > svg {
  position: relative;
}

.current::after {
  content: "";
  position: absolute;
  bottom: 2px;
  width: 20px;
  height: 4px;
  border-radius: 2px;
  background: #d8a7e6;
}

.count {
  position: absolute;
  right: 6px;
  top: 8px;
  width: 20px;
  height: 20px;
  border-radius: 50%;
  background: #d3a8e8;
  color: #111;
  font-size: 13px;
  line-height: 20px;
  text-align: center;
}

.profile-dot {
  position: absolute;
  right: 4px;
  top: 7px;
  width: 20px;
  height: 20px;
  border-radius: 50%;
  background: #c0360c;
  font-size: 12px;
  line-height: 20px;
  text-align: center;
}

.tray {
  display: flex;
  justify-content: flex-end;
  align-items: center;
  height: 100%;
}

.tray-cell {
  display: flex;
  align-items: center;
  justify-content: center;
}

.w40 {
  width: 40px;
}

.w38 {
  width: 38px;
}

.w30 {
  width: 30px;
}

.tray-lang {
  width: 61px;
  text-align: center;
  line-height: 20px;
}

.tray-clock {
  width: 118px;
  padding-right: 24px;
  text-align: right;
  line-height: 20px;
  letter-spacing: 0.15px;
}
```
